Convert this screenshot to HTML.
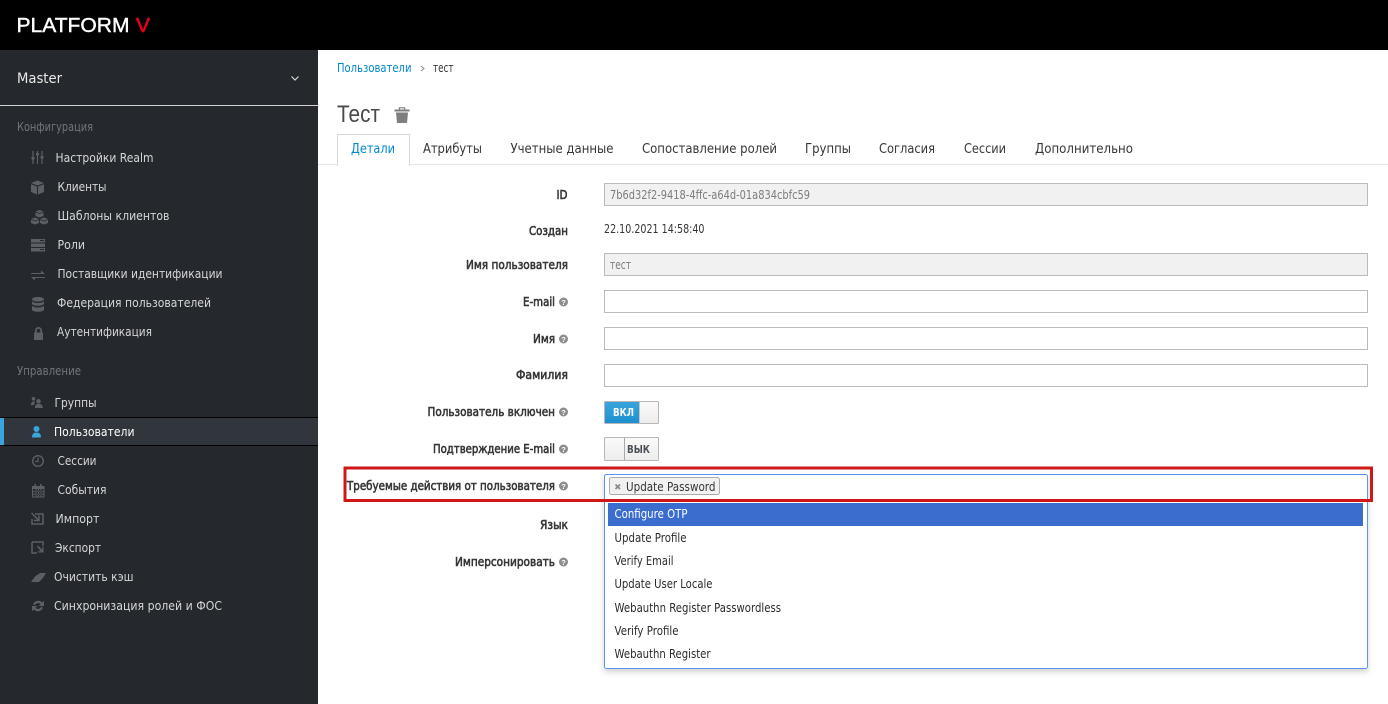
<!DOCTYPE html>
<html lang="ru"><head><meta charset="utf-8"><title>Platform V</title>
<style>
html,body{margin:0;padding:0;width:1388px;height:704px;overflow:hidden;background:#fff}
svg{display:block;font-family:"DejaVu Sans","Liberation Sans",sans-serif;font-size:12.5px}
.n{fill:#d5d6d7}
.h{fill:#72767b}
.l{fill:#363636;stroke:#363636;stroke-width:.6px;font-size:12px}
.t{fill:#363636}
.g{fill:#7c7c7c}
.o{fill:#2b2b2b;font-size:12px}
.i{fill:#5c6066}
.s{stroke:#5c6066;fill:none}
.q{fill:#8b8d8f}
.qt{fill:#fff;font-size:7.5px;font-weight:700;font-family:"Liberation Sans",sans-serif}
</style></head><body>
<svg width="1388" height="704" viewBox="0 0 1388 704" xmlns="http://www.w3.org/2000/svg">
<defs>
<linearGradient id="bl" x1="0" y1="0" x2="0" y2="1"><stop offset="0" stop-color="#39a5dc"/><stop offset="1" stop-color="#1e8fd0"/></linearGradient>
<linearGradient id="gr" x1="0" y1="0" x2="0" y2="1"><stop offset="0" stop-color="#fafafa"/><stop offset="1" stop-color="#ededed"/></linearGradient>
<filter id="sh" x="-2%" y="-5%" width="104%" height="112%"><feDropShadow dx="0" dy="3" stdDeviation="3" flood-color="#000" flood-opacity=".18"/></filter>
</defs>
<rect width="1388" height="704" fill="#fff"/>
<!-- top bar -->
<rect width="1388" height="50" fill="#000"/>
<text x="16.500" y="32" font-family="'Liberation Sans',sans-serif" font-size="20" fill="#fff" stroke="#fff" stroke-width=".4" textLength="113" lengthAdjust="spacingAndGlyphs">PLATFORM</text>
<text x="136" y="32" font-family="'Liberation Sans',sans-serif" font-size="20" fill="#e4001b" stroke="#e4001b" stroke-width=".6" textLength="14" lengthAdjust="spacingAndGlyphs">V</text>
<!-- sidebar -->
<rect y="50" width="318" height="654" fill="#25282d"/>
<text x="17" y="83" font-size="14.500" fill="#e8e8e8" textLength="45" lengthAdjust="spacingAndGlyphs">Master</text>
<path d="M291.500 76.500l3.500 3.500 3.500-3.500" fill="none" stroke="#d5d6d7" stroke-width="1.200"/>
<rect y="105" width="318" height="1" fill="#d1d1d1"/>
<text class="h" x="17" y="131" font-size="12" textLength="76" lengthAdjust="spacingAndGlyphs">Конфигурация</text>
<text class="n" x="55.500" y="162" textLength="98" lengthAdjust="spacingAndGlyphs">Настройки Realm</text>
<text class="n" x="57.500" y="191" textLength="49" lengthAdjust="spacingAndGlyphs">Клиенты</text>
<text class="n" x="57.500" y="220" textLength="112" lengthAdjust="spacingAndGlyphs">Шаблоны клиентов</text>
<text class="n" x="57.500" y="249" textLength="27.500" lengthAdjust="spacingAndGlyphs">Роли</text>
<text class="n" x="57.500" y="278" textLength="165" lengthAdjust="spacingAndGlyphs">Поставщики идентификации</text>
<text class="n" x="57" y="307" textLength="154" lengthAdjust="spacingAndGlyphs">Федерация пользователей</text>
<text class="n" x="57" y="336" textLength="95" lengthAdjust="spacingAndGlyphs">Аутентификация</text>
<text class="h" x="17" y="375" font-size="12" textLength="64" lengthAdjust="spacingAndGlyphs">Управление</text>
<text class="n" x="54.500" y="407" textLength="42" lengthAdjust="spacingAndGlyphs">Группы</text>
<rect y="417" width="318" height="29" fill="#30363b"/>
<rect y="417" width="318" height="1" fill="#000"/>
<rect y="445" width="318" height="1" fill="#000"/>
<rect y="418" width="4" height="27" fill="#39a5dc"/>
<text x="54" y="436" fill="#fff" textLength="80.500" lengthAdjust="spacingAndGlyphs">Пользователи</text>
<text class="n" x="57.500" y="465" textLength="39" lengthAdjust="spacingAndGlyphs">Сессии</text>
<text class="n" x="57.500" y="494" textLength="49" lengthAdjust="spacingAndGlyphs">События</text>
<text class="n" x="55.500" y="523" textLength="44" lengthAdjust="spacingAndGlyphs">Импорт</text>
<text class="n" x="55" y="552" textLength="46" lengthAdjust="spacingAndGlyphs">Экспорт</text>
<text class="n" x="54" y="581" textLength="79.500" lengthAdjust="spacingAndGlyphs">Очистить кэш</text>
<text class="n" x="54" y="610" textLength="168" lengthAdjust="spacingAndGlyphs">Синхронизация ролей и ФОС</text>
<!-- sidebar icons -->
<g class="i">
<path class="s" stroke-width="1.200" d="M33 151v13M37.500 151v13M42 151v13"/>
<rect x="31.500" y="157" width="3" height="2.500"/><rect x="36" y="153" width="3" height="2.500"/><rect x="40.500" y="156" width="3" height="2.500"/>
<path d="M37.500 180.500l6.500 2.500-6.500 2.500-6.500-2.500zM31 184.200l6 2.300v8l-6-2.500zM44 184.200l-6 2.300v8l6-2.500z"/>
<path d="M39.500 210l4 1.500v4.500l-4 1.500-4-1.500v-4.500zM35 217.500l4 1.500v4l-4 1.500-4-1.500v-4zM44 217.500l4 1.500v4l-4 1.500-4-1.500v-4z"/>
<path d="M35.500 212l4 1.500 4-1.500M31 219.500l4 1.500 4-1.500M40 219.500l4 1.500 4-1.500" fill="none" stroke="#25282d" stroke-width=".7"/>
<path fill-rule="evenodd" d="M31 239h14v3.500H31zM31 243.500h14v3.500H31zM31 248h14v3.500H31zM40 240v1h4v-1zM40 249v1h4v-1z"/>
<path d="M31 272h10v-2.500l4 3.500H31zM45 277H35v2.500L31 276h14z" transform="translate(0 1)"/>
<path d="M38 297c3.500 0 6 1 6 2.300s-2.500 2.300-6 2.300-6-1-6-2.300 2.500-2.300 6-2.300zM32 301c1 1.500 3.500 2 6 2s5-.5 6-2v2.500c0 1.300-2.500 2.300-6 2.300s-6-1-6-2.300zM32 305.500c1 1.500 3.500 2 6 2s5-.5 6-2v4c0 1.300-2.500 2.300-6 2.300s-6-1-6-2.300z"/>
<path fill-rule="evenodd" d="M34 332.500h1v-2a3.500 3.500 0 017 0v2h1v7.500h-9zM36.700 332.500h3.600v-2a1.800 1.800 0 00-3.600 0z"/>
<path d="M33.500 397a1.800 1.800 0 110 3.600 1.800 1.800 0 010-3.600zM38.500 399a2.200 2.200 0 110 4.400 2.200 2.200 0 010-4.400zM31 405c0-2.500 1-3.500 2.500-3.500.8 0 1.300.2 1.700.6-.7.700-1.200 1.600-1.300 2.900zM35 408c0-3 1.200-4.200 3.500-4.200s4 1.200 4.500 4.200z"/>
<path d="M36.500 426a3 3 0 110 6 3 3 0 010-6zM32 437.500c0-3.500 1.500-5 4.500-5s4.500 1.500 4.500 5z" style="fill:#39a5dc"/>
<circle class="s" stroke-width="1.400" cx="38" cy="461" r="5.300"/>
<path class="s" stroke-width="1.200" d="M38 457.500v4h-2.800"/>
<path fill-rule="evenodd" d="M32 486h2.500v-2h1.500v2h4v-2h1.500v2H44.500v11.500H32zM33 489v7.500h10.500V489zM35.500 489h1v7.500h-1zM38 489h1v7.500h-1zM40.500 489h1v7.500h-1zM33 491.200h10.500v1H33zM33 493.800h10.500v1H33z"/>
<path class="s" stroke-width="1.500" d="M35 514h8v10H32v-5"/><path d="M31 513.500l1-1 6.200 6.200v-3.200h1.500v5.800h-5.800v-1.500h3.200z"/>
<path class="s" stroke-width="1.500" d="M32 542h11v4M32 542v11h5"/><path d="M37 546.500l1-1 4.200 4.200V547h1.300v5.500H38v-1.300h2.700z"/>
<path d="M31 582l4-5.500 5-3.500h6l-3 5-4 4z"/>
<path d="M33 604.500a5.500 5.500 0 019.200-2l1.800-1.800v5.300h-5.300l1.900-1.900a3.400 3.400 0 00-5.500.9zM43 607.500a5.500 5.500 0 01-9.200 2L32 611.300V606h5.300l-1.900 1.900a3.400 3.400 0 005.500-.9z"/>
</g>
<!-- breadcrumb -->
<text x="337" y="72" font-size="12" fill="#0088ce" textLength="74.500" lengthAdjust="spacingAndGlyphs">Пользователи</text>
<path d="M421 66l3 2.500-3 2.500" fill="none" stroke="#8a8a8a"/>
<text x="433" y="72" font-size="12" fill="#363636" textLength="20.500" lengthAdjust="spacingAndGlyphs">тест</text>
<!-- title -->
<text x="337" y="122" font-family="'Liberation Sans',sans-serif" font-size="24" fill="#4a4a4a" textLength="43" lengthAdjust="spacingAndGlyphs">Тест</text>
<path fill="#7e7e7e" d="M394.500 109.500h4.300v-2.300h6.400v2.300h4.300v2h-15zM396 112.500h12l-1 10.500h-10zM400 108.400v1.100h4v-1.100z" fill-rule="evenodd"/>
<!-- tabs -->
<rect x="318" y="164" width="1070" height="1" fill="#e6e6e6"/>
<rect x="337.500" y="134.500" width="72" height="31" fill="#fff" stroke="#d8d8d8"/>
<rect x="338" y="163" width="71" height="3" fill="#fff"/>
<text x="351" y="153" font-size="13" fill="#0088ce" textLength="44" lengthAdjust="spacingAndGlyphs">Детали</text>
<text class="t" x="423" y="153" font-size="13" textLength="59" lengthAdjust="spacingAndGlyphs">Атрибуты</text>
<text class="t" x="510.500" y="153" font-size="13" textLength="103" lengthAdjust="spacingAndGlyphs">Учетные данные</text>
<text class="t" x="642" y="153" font-size="13" textLength="135" lengthAdjust="spacingAndGlyphs">Сопоставление ролей</text>
<text class="t" x="805" y="153" font-size="13" textLength="46" lengthAdjust="spacingAndGlyphs">Группы</text>
<text class="t" x="879" y="153" font-size="13" textLength="56" lengthAdjust="spacingAndGlyphs">Согласия</text>
<text class="t" x="964" y="153" font-size="13" textLength="42" lengthAdjust="spacingAndGlyphs">Сессии</text>
<text class="t" x="1035" y="153" font-size="13" textLength="98" lengthAdjust="spacingAndGlyphs">Дополнительно</text>
<!-- labels -->
<text class="l" x="556.500" y="199" textLength="11" lengthAdjust="spacingAndGlyphs">ID</text>
<text class="l" x="529" y="235" textLength="39" lengthAdjust="spacingAndGlyphs">Создан</text>
<text class="l" x="466" y="269" textLength="102" lengthAdjust="spacingAndGlyphs">Имя пользователя</text>
<text class="l" x="523" y="306" textLength="32" lengthAdjust="spacingAndGlyphs">E-mail</text>
<text class="l" x="533" y="343" textLength="22" lengthAdjust="spacingAndGlyphs">Имя</text>
<text class="l" x="516" y="379" textLength="52" lengthAdjust="spacingAndGlyphs">Фамилия</text>
<text class="l" x="427.500" y="416" textLength="127.500" lengthAdjust="spacingAndGlyphs">Пользователь включен</text>
<text class="l" x="433" y="453" textLength="122" lengthAdjust="spacingAndGlyphs">Подтверждение E-mail</text>
<text class="l" x="347" y="490" textLength="208" lengthAdjust="spacingAndGlyphs">Требуемые действия от пользователя</text>
<text class="l" x="540" y="529" textLength="28" lengthAdjust="spacingAndGlyphs">Язык</text>
<text class="l" x="455" y="566" textLength="100" lengthAdjust="spacingAndGlyphs">Имперсонировать</text>
<!-- help icons -->
<g>
<circle class="q" cx="563.500" cy="302" r="4.500"/><text class="qt" x="563.500" y="304.800" text-anchor="middle">?</text>
<circle class="q" cx="563.500" cy="339" r="4.500"/><text class="qt" x="563.500" y="341.800" text-anchor="middle">?</text>
<circle class="q" cx="563.500" cy="412" r="4.500"/><text class="qt" x="563.500" y="414.800" text-anchor="middle">?</text>
<circle class="q" cx="563.500" cy="449" r="4.500"/><text class="qt" x="563.500" y="451.800" text-anchor="middle">?</text>
<circle class="q" cx="563.500" cy="486" r="4.500"/><text class="qt" x="563.500" y="488.800" text-anchor="middle">?</text>
<circle class="q" cx="563.500" cy="562" r="4.500"/><text class="qt" x="563.500" y="564.800" text-anchor="middle">?</text>
</g>
<!-- inputs -->
<rect x="604.500" y="183.500" width="763" height="22" fill="#f1f1f1" stroke="#bbb"/>
<text class="g" x="610" y="199" font-size="12" textLength="200" lengthAdjust="spacingAndGlyphs">7b6d32f2-9418-4ffc-a64d-01a834cbfc59</text>
<text class="t" x="604" y="233" font-size="12" textLength="100.500" lengthAdjust="spacingAndGlyphs">22.10.2021 14:58:40</text>
<rect x="604.500" y="253.500" width="763" height="22" fill="#f1f1f1" stroke="#bbb"/>
<text class="g" x="610" y="269" font-size="12" textLength="21" lengthAdjust="spacingAndGlyphs">тест</text>
<rect x="604.500" y="290.500" width="763" height="22" fill="#fff" stroke="#bbb"/>
<rect x="604.500" y="327.500" width="763" height="22" fill="#fff" stroke="#bbb"/>
<rect x="604.500" y="364.500" width="763" height="22" fill="#fff" stroke="#bbb"/>
<!-- toggles -->
<rect x="604.500" y="401.500" width="54" height="22" rx="1" fill="url(#gr)" stroke="#b7b7b7"/>
<rect x="605" y="402" width="34" height="21" fill="url(#bl)"/>
<rect x="639" y="402" width="1" height="21" fill="#c6c6c6"/>
<text x="613" y="416" font-size="10.500" font-weight="700" fill="#fff" textLength="21" lengthAdjust="spacingAndGlyphs">ВКЛ</text>
<rect x="604.500" y="437.500" width="54" height="23" rx="1" fill="url(#gr)" stroke="#b7b7b7"/>
<rect x="624" y="438" width="1" height="22" fill="#a9a9a9"/>
<text x="627" y="453" font-size="10.500" font-weight="700" fill="#4d5258" textLength="23" lengthAdjust="spacingAndGlyphs">ВЫК</text>
<!-- select with dropdown -->
<rect x="604.500" y="474.500" width="763" height="194" rx="2" fill="#fff" stroke="#5b93f5" filter="url(#sh)"/>
<rect x="609.500" y="477.500" width="110" height="17" rx="2" fill="#f1f1f1" stroke="#aaa"/>
<path d="M615.500 484.500l4.500 4.500M620 484.500l-4.500 4.500" stroke="#8a8a8a" stroke-width="1.800"/>
<text class="t" x="626" y="491" font-size="12" textLength="89.500" lengthAdjust="spacingAndGlyphs">Update Password</text>
<rect x="608" y="503" width="755" height="23" fill="#3a6dce"/>
<text x="614.500" y="518" font-size="12" fill="#fff" textLength="73" lengthAdjust="spacingAndGlyphs">Configure OTP</text>
<text class="o" x="614.500" y="542" textLength="72" lengthAdjust="spacingAndGlyphs">Update Profile</text>
<text class="o" x="614.500" y="565" textLength="59" lengthAdjust="spacingAndGlyphs">Verify Email</text>
<text class="o" x="614.500" y="588" textLength="98" lengthAdjust="spacingAndGlyphs">Update User Locale</text>
<text class="o" x="614.500" y="612" textLength="166.500" lengthAdjust="spacingAndGlyphs">Webauthn Register Passwordless</text>
<text class="o" x="614.500" y="635" textLength="64" lengthAdjust="spacingAndGlyphs">Verify Profile</text>
<text class="o" x="614.500" y="658" textLength="96" lengthAdjust="spacingAndGlyphs">Webauthn Register</text>
<!-- red highlight -->
<rect x="345" y="468" width="1026.500" height="32.500" fill="none" stroke="#d01717" stroke-width="3"/>
</svg>
</body></html>
